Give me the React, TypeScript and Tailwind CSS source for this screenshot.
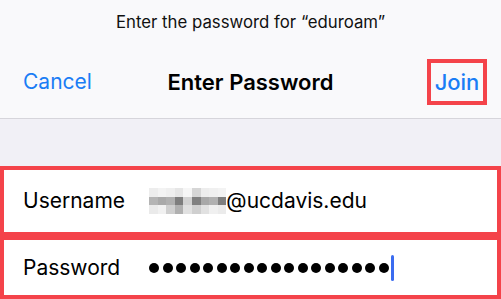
const blur = [
  ["#ededed", "#f3f3f3", "#efefef", "#e6e6e6", "#f6f6f6", "#d6d6d6", "#ededed", "#f0f0f0", "#f3f3f3"],
  ["#b4b4b4", "#a9a9a9", "#b0b0b0", "#7e7e7e", "#d2d2d2", "#808080", "#a8a8a8", "#b1b1b1", "#7f7f7f"],
  ["#eaeaea", "#f1f1f1", "#cfcfcf", "#b0b0b0", "#e1e1e1", "#cfcfcf", "#e1e1e1", "#f0f0f0", "#ebebeb"],
];

function Blurred() {
  return (
    <div className="flex flex-col">
      {blur.map((row, i) => (
        <div key={i} className="flex">
          {row.map((c, j) => (
            <div key={j} className="h-[8.4px] w-[8.6px]" style={{ backgroundColor: c }} />
          ))}
        </div>
      ))}
    </div>
  );
}

export default function App() {
  return (
    <div
      className="flex h-[299px] w-[501px] flex-col overflow-hidden bg-[#f1f0f6]"
      style={{ fontFamily: "Inter, 'Noto Sans', sans-serif" }}
    >
      <div className="flex h-[119px] flex-col border-b border-[#d6d5db] bg-[#f9f9fb]">
        <p className="pt-[11px] text-center text-[16.8px] leading-[22px] text-[#111]">
          Enter the password for “eduroam”
        </p>
        <div className="mt-[26px] grid h-[46px] grid-cols-[1fr_auto_1fr] items-center">
          <span className="pl-[23px] text-[21px] text-[#1a7df5]">Cancel</span>
          <span className="text-[22px] font-semibold text-black">Enter Password</span>
          <div className="flex justify-end pr-[14px]">
            <span className="flex h-[46px] w-[60px] items-center justify-center border-4 border-[#f4434a] text-[22px] font-medium text-[#1a7df5]">
              Join
            </span>
          </div>
        </div>
      </div>

      <div className="mt-[47px] flex flex-col">
        <div className="flex h-[70px] items-center border-4 border-[#f4434a] bg-white pl-[19px] text-[21px] text-black">
          <span className="w-[126px]">Username</span>
          <div className="flex items-center">
            <Blurred />
            <span>@ucdavis.edu</span>
          </div>
        </div>
        <div className="flex h-[63px] items-center border-4 border-[#f4434a] bg-white pl-[19px] text-[21px] text-black">
          <span className="w-[126px]">Password</span>
          <div className="flex items-center gap-[3.5px]">
            {Array.from({ length: 18 }).map((_, i) => (
              <div key={i} className="h-[10px] w-[10px] rounded-full bg-black" />
            ))}
            <div className="ml-[-1px] h-[26px] w-[2.5px] rounded-sm bg-[#3b6cf0]" />
          </div>
        </div>
      </div>
    </div>
  );
}
